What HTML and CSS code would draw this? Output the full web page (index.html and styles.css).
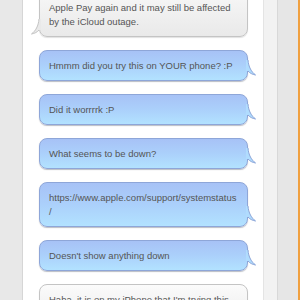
FILE: index.html
```html
<!DOCTYPE html>
<html>
<head>
<meta charset="utf-8">
<link rel="stylesheet" href="styles.css">
</head>
<body>
<div class="app">
  <div class="rail-left"></div>
  <div class="chat">
    <div class="thread">
      <div class="msg them">I was trying to set my card up in<br>Apple Pay again and it may still be affected<br>by the iCloud outage.<svg class="tail tail-left" width="10" height="16" viewBox="0 0 10 16"><path d="M10,0 L8,0 C7.5,7 4.5,12 0,15 C3.5,14.5 6.5,13 8,11 L10,11 Z" fill="#e9e9e9"/><path d="M8,0 C7.5,7 4.5,12 0.5,15 C3.5,14.5 6.5,13 8,11" fill="none" stroke="#c4c4c4" stroke-width="1"/></svg></div>
      <div class="msg me">Hmmm did you try this on YOUR phone? :P<svg class="tail tail-right" width="10" height="16" viewBox="0 0 10 16"><path d="M0,0 L2,0 C2.5,7 5.5,12 10,15 C6.5,14.5 3.5,13 2,11 L0,11 Z" fill="#b0dcfe"/><path d="M2,0 C2.5,7 5.5,12 9.5,15 C6.5,14.5 3.5,13 2,11" fill="none" stroke="#8ea6d8" stroke-width="1"/></svg></div>
      <div class="msg me">Did it worrrrk :P<svg class="tail tail-right" width="10" height="16" viewBox="0 0 10 16"><path d="M0,0 L2,0 C2.5,7 5.5,12 10,15 C6.5,14.5 3.5,13 2,11 L0,11 Z" fill="#b0dcfe"/><path d="M2,0 C2.5,7 5.5,12 9.5,15 C6.5,14.5 3.5,13 2,11" fill="none" stroke="#8ea6d8" stroke-width="1"/></svg></div>
      <div class="msg me">What seems to be down?<svg class="tail tail-right" width="10" height="16" viewBox="0 0 10 16"><path d="M0,0 L2,0 C2.5,7 5.5,12 10,15 C6.5,14.5 3.5,13 2,11 L0,11 Z" fill="#b0dcfe"/><path d="M2,0 C2.5,7 5.5,12 9.5,15 C6.5,14.5 3.5,13 2,11" fill="none" stroke="#8ea6d8" stroke-width="1"/></svg></div>
      <div class="msg me">https://www.apple.com/support/systemstatus<br>/<svg class="tail tail-right" width="10" height="16" viewBox="0 0 10 16"><path d="M0,0 L2,0 C2.5,7 5.5,12 10,15 C6.5,14.5 3.5,13 2,11 L0,11 Z" fill="#b0dcfe"/><path d="M2,0 C2.5,7 5.5,12 9.5,15 C6.5,14.5 3.5,13 2,11" fill="none" stroke="#8ea6d8" stroke-width="1"/></svg></div>
      <div class="msg me">Doesn't show anything down<svg class="tail tail-right" width="10" height="16" viewBox="0 0 10 16"><path d="M0,0 L2,0 C2.5,7 5.5,12 10,15 C6.5,14.5 3.5,13 2,11 L0,11 Z" fill="#b0dcfe"/><path d="M2,0 C2.5,7 5.5,12 9.5,15 C6.5,14.5 3.5,13 2,11" fill="none" stroke="#8ea6d8" stroke-width="1"/></svg></div>
      <div class="msg them">Haha, it is on my iPhone that I'm trying this<br>out.</div>
    </div>
  </div>
  <div class="strip"></div>
  <div class="rail-right"></div>
  <div class="accent"></div>
</div>
</body>
</html>
```
FILE: styles.css
```css
html, body {
  margin: 0;
  padding: 0;
  width: 300px;
  height: 300px;
  overflow: hidden;
  background: #ffffff;
}
.app {
  display: flex;
  height: 300px;
  font-family: "Liberation Sans", Arial, sans-serif;
}
.rail-left {
  width: 22px;
  background: #e8e8e8;
  border-right: 1px solid #d6d6d6;
  flex: none;
}
.chat {
  width: 240px;
  flex: none;
  background: #ffffff;
  overflow: hidden;
}
.thread {
  display: flex;
  flex-direction: column;
  gap: 13px;
  margin-top: -22px;
  padding-left: 16px;
}
.msg {
  position: relative;
  width: 190px;
  padding: 8px 8px 7px 9px;
  border-radius: 8px;
  font-size: 9.5px;
  line-height: 14px;
  color: #555555;
  white-space: nowrap;
}
.me {
  background: linear-gradient(to bottom, #a7c2f6 0%, #abd0fb 50%, #b2e2ff 100%);
  border: 1px solid #8ea6d8;
  box-shadow: 0 1px 1px rgba(60, 70, 90, 0.35);
}
.them {
  background: linear-gradient(to bottom, #fbfbfb 0%, #e9e9e9 100%);
  border: 1px solid #c4c4c4;
  box-shadow: 0 1px 1px rgba(0, 0, 0, 0.12);
}
.tail {
  position: absolute;
  display: block;
}
.tail-right {
  right: -9px;
  bottom: 4px;
}
.tail-left {
  left: -9px;
  bottom: 1px;
}
.strip {
  width: 13px;
  flex: none;
  background: #f2f2f2;
  border-left: 1px solid #e4e4e4;
  border-right: 1px solid #d8d8d8;
}
.rail-right {
  width: 20px;
  flex: none;
  background: #e6e6e6;
}
.accent {
  width: 2px;
  flex: none;
  background: #f0a040;
}
```
